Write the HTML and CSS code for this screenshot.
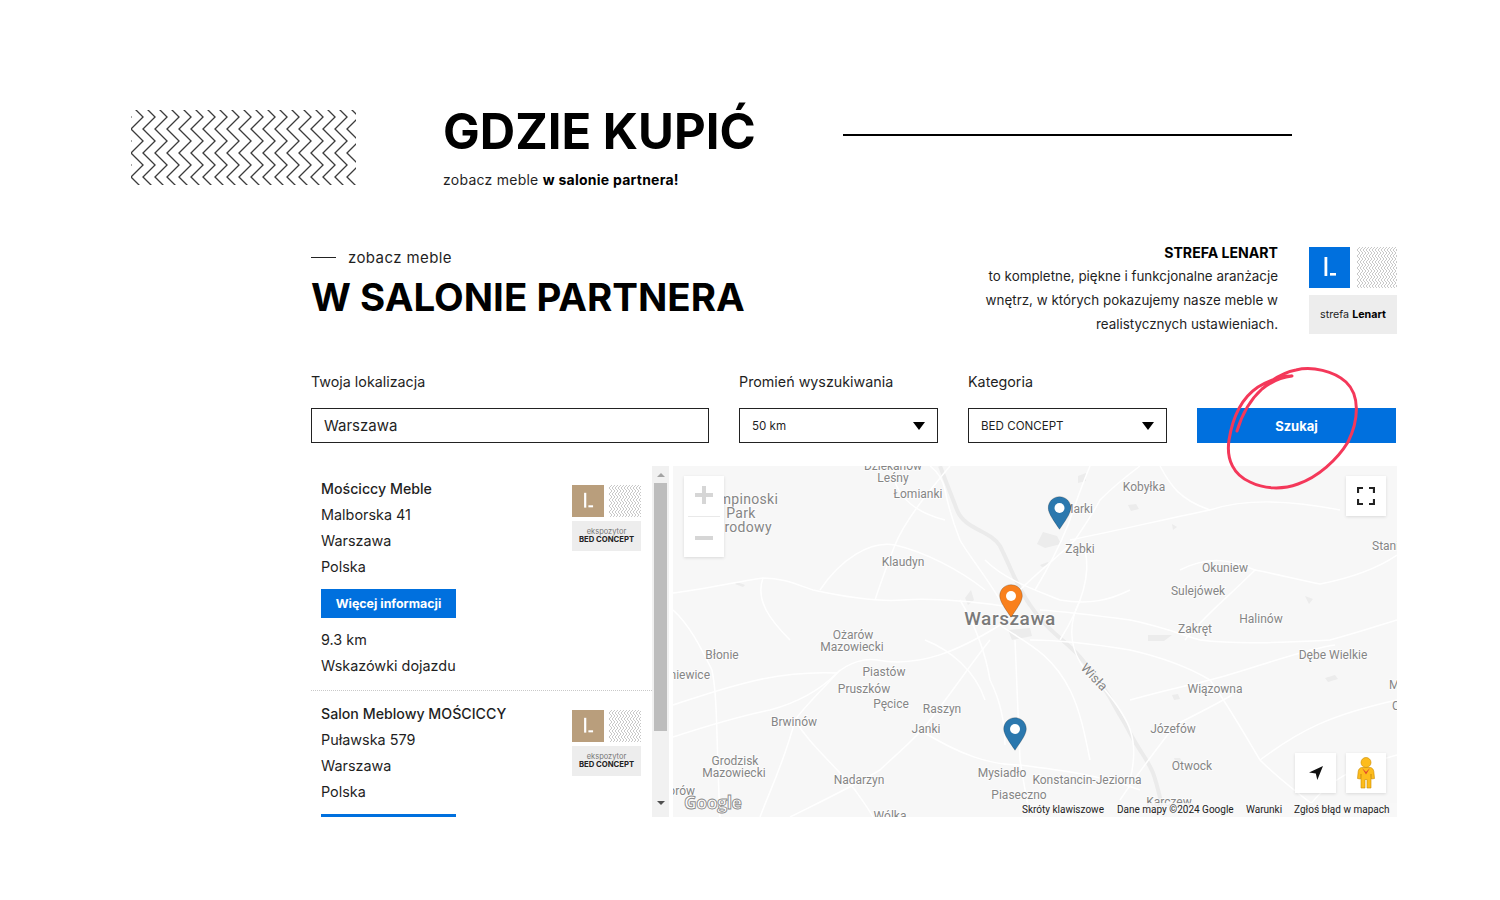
FILE: index.html
```html
<!DOCTYPE html>
<html lang="pl">
<head>
<meta charset="utf-8">
<title>Gdzie kupić</title>
<link rel="stylesheet" href="styles.css">
</head>
<body>
<svg class="defs" width="0" height="0" aria-hidden="true">
  <defs>
    <pattern id="zz" width="12" height="24" patternUnits="userSpaceOnUse" x="0" y="7">
      <path d="M0-12 12 0 0 12 12 24 0 36M12-12 24 0 12 12 24 24 12 36M-12-12 0 0-12 12 0 24-12 36" fill="none" stroke="#3c3c3c" stroke-width="1.3"/>
    </pattern>
    <pattern id="zzs" width="3" height="6" patternUnits="userSpaceOnUse">
      <path d="M0-3 3 0 0 3 3 6 0 9M3-3 6 0 3 3 6 6 3 9M-3-3 0 0-3 3 0 6-3 9" fill="none" stroke="#9a9a9a" stroke-width=".55"/>
    </pattern>
    <symbol id="l-mark" viewBox="0 0 41 41">
      <rect x="15.5" y="10" width="2.8" height="19" fill="#fff"/>
      <rect x="21" y="26" width="6" height="2.6" fill="#fff"/>
    </symbol>
  </defs>
</svg>

<header class="hero">
  <svg class="hero-pattern" width="225" height="75"><rect width="225" height="75" fill="url(#zz)"/></svg>
  <div class="hero-text">
    <h1 class="hero-title">GDZIE KUPIĆ</h1>
    <p class="hero-sub">zobacz meble <b>w salonie partnera!</b></p>
  </div>
  <div class="hero-line"></div>
</header>

<main class="finder">
  <section class="intro">
    <div class="intro-left">
      <p class="kicker"><span class="kicker-dash"></span>zobacz meble</p>
      <h2 class="intro-title">W SALONIE PARTNERA</h2>
    </div>
    <div class="intro-right">
      <h3 class="zone-title">STREFA LENART</h3>
      <p class="zone-line">to kompletne, piękne i funkcjonalne aranżacje</p>
      <p class="zone-line">wnętrz, w których pokazujemy nasze meble w</p>
      <p class="zone-line">realistycznych ustawieniach.</p>
    </div>
    <div class="badge badge-large">
      <div class="badge-top">
        <svg class="mark mark-blue" width="41" height="41"><use href="#l-mark"/></svg>
        <svg class="mark-pattern" width="40" height="41"><rect width="40" height="41" fill="url(#zzs)"/></svg>
      </div>
      <div class="badge-label"><span>strefa <b>Lenart</b></span></div>
    </div>
  </section>

  <form class="search">
    <div class="field field-loc">
      <label class="field-label">Twoja lokalizacja</label>
      <div class="control control-text">Warszawa</div>
    </div>
    <div class="field field-select">
      <label class="field-label">Promień wyszukiwania</label>
      <div class="control control-select">50 km<span class="caret"></span></div>
    </div>
    <div class="field field-select">
      <label class="field-label">Kategoria</label>
      <div class="control control-select">BED CONCEPT<span class="caret"></span></div>
    </div>
    <div class="field field-btn">
      <div class="search-btn">Szukaj</div>
    </div>
  </form>

  <section class="results">
    <div class="list">
      <article class="store">
        <div class="store-info">
          <h4 class="store-name">Mościccy Meble</h4>
          <p class="store-line">Malborska 41</p>
          <p class="store-line">Warszawa</p>
          <p class="store-line">Polska</p>
          <div class="more-btn">Więcej informacji</div>
          <p class="store-line">9.3 km</p>
          <p class="store-line">Wskazówki dojazdu</p>
        </div>
        <div class="badge badge-small">
          <div class="badge-top">
            <svg class="mark mark-tan" width="32" height="32" viewBox="0 0 41 41"><use href="#l-mark"/></svg>
            <svg class="mark-pattern" width="32" height="32"><rect width="32" height="32" fill="url(#zzs)"/></svg>
          </div>
          <div class="badge-label"><span class="expo">ekspozytor<b>BED CONCEPT</b></span></div>
        </div>
      </article>
      <article class="store">
        <div class="store-info">
          <h4 class="store-name">Salon Meblowy MOŚCICCY</h4>
          <p class="store-line">Puławska 579</p>
          <p class="store-line">Warszawa</p>
          <p class="store-line">Polska</p>
          <div class="more-btn">Więcej informacji</div>
        </div>
        <div class="badge badge-small">
          <div class="badge-top">
            <svg class="mark mark-tan" width="32" height="32" viewBox="0 0 41 41"><use href="#l-mark"/></svg>
            <svg class="mark-pattern" width="32" height="32"><rect width="32" height="32" fill="url(#zzs)"/></svg>
          </div>
          <div class="badge-label"><span class="expo">ekspozytor<b>BED CONCEPT</b></span></div>
        </div>
      </article>
    </div>

    <div class="scrollbar">
      <span class="sb-arrow sb-up"></span>
      <span class="sb-thumb"></span>
      <span class="sb-arrow sb-down"></span>
    </div>

    <div class="map">
      <svg class="map-canvas" width="724" height="351" viewBox="673 466 724 351">
        <defs>
          <symbol id="pin" viewBox="0 0 24 34">
            <path d="M12 .7C5.6.7.7 5.7.7 12c0 5.6 6.2 13.6 11.3 21.3C17.100 25.600 23.300 17.600 23.300 12 23.300 5.700 18.400.7 12 .7Z" fill="currentColor" stroke="rgba(0,0,0,.25)" stroke-width=".8"/>
            <circle cx="12" cy="12" r="5" fill="#fff"/>
          </symbol>
        </defs>
        <rect class="map-bg" x="673" y="466" width="724" height="351"/>
        <g class="blocks">
          <path d="M1043 532l14 4 4 8-16 4-8-4z"/>
          <path d="M1078 476l8-3 0 8-8 2z"/>
          <path d="M1128 505l8-1 3 5-8 2z"/>
          <path d="M1008 630l22-2 2 8-20 4z"/>
          <path d="M965 598l6-8 3 10-6 5z"/>
          <path d="M737 582l8 3-2 2-8-3z"/>
          <path d="M1305 596l8 3-4 5z"/>
          <path d="M1172 524l5 3-4 3z"/>
          <path d="M1174 758l6 0 2 4-6 1z"/>
          <path d="M1325 678l10-3 3 4-10 3z"/>
          <path d="M1172 695l6-1 2 5-6 1z"/>
          <path d="M1148 635l24 0-8 6-16 0z"/>
          <path d="M1040 565l8-3 2 3-8 2z"/>
        </g>
        <path class="river" d="M940 466 957 510C965 530 990 530 1000 546 1012 570 1016 585 1030 605 1048 632 1065 640 1080 657 1096 676 1106 690 1113 703 1120 716 1126 725 1130 733 1140 752 1148 760 1153 773 1158 786 1160 800 1165 817"/>
        <g class="roads">
          <path d="M673 737C710 725 740 716 770 710 800 702 820 690 837 673 850 662 865 658 877 660 920 668 960 650 1000 625"/>
          <path d="M673 593C700 590 735 582 763 578 785 578 800 586 813 590 850 598 880 602 903 600 930 598 960 600 1003 606"/>
          <path d="M1000 600C985 575 965 550 960 540 952 520 948 505 945 490 943 480 938 472 930 466"/>
          <path d="M1020 590C1040 570 1060 555 1075 540 1085 525 1095 510 1100 500 1115 485 1128 475 1140 466"/>
          <path d="M1040 610C1070 612 1100 616 1130 620 1160 626 1180 634 1200 640 1240 645 1290 642 1330 640 1360 632 1380 625 1397 620"/>
          <path d="M1030 640C1065 640 1100 645 1130 650 1165 658 1190 668 1210 680 1228 705 1245 735 1260 760 1280 780 1300 795 1320 810"/>
          <path d="M1015 640C1017 680 1018 720 1020 760 1023 780 1027 800 1030 817"/>
          <path d="M990 640C970 665 950 695 930 720 915 740 895 755 880 770 850 788 820 802 790 817"/>
          <path d="M1090 466C1080 490 1075 505 1068 525 1060 545 1050 565 1035 590"/>
          <path d="M1070 540C1120 530 1170 518 1210 510 1240 500 1280 498 1340 510"/>
          <path d="M1255 570C1280 575 1300 580 1320 584 1350 578 1375 570 1397 555"/>
          <path d="M1180 570C1210 555 1230 560 1255 570 1225 600 1205 615 1185 640"/>
          <path d="M673 610C690 625 702 650 712 670 718 700 716 740 720 817"/>
          <path d="M840 670C822 690 806 705 795 720 810 745 830 760 855 790 862 800 868 808 873 817"/>
          <path d="M950 466C930 490 905 520 895 545 885 570 880 585 875 600"/>
          <path d="M820 590C840 560 870 540 895 545 925 552 960 570 985 590"/>
          <path d="M1060 640C1085 600 1090 570 1085 550"/>
          <path d="M1130 700C1165 690 1190 685 1210 680 1250 670 1300 650 1335 645"/>
          <path d="M1120 800C1140 770 1160 745 1175 725 1195 715 1215 705 1232 695"/>
          <path d="M920 730C960 755 990 765 1020 765 1060 770 1100 775 1140 790"/>
          <path d="M673 705C720 690 770 670 837 673"/>
          <path d="M760 817C770 790 785 760 795 720"/>
          <path d="M1080 600C1060 640 1080 670 1105 690 1130 720 1140 740 1130 780"/>
          <path d="M1260 760C1300 730 1330 715 1397 700"/>
          <path d="M960 600C975 625 985 650 990 680 1000 700 1005 720 1005 745"/>
          <path d="M985 560C1005 580 1035 590 1060 600 1090 605 1110 600 1130 590"/>
          <path d="M1000 625C1020 640 1050 650 1070 690 1080 710 1085 735 1090 760"/>
          <path d="M925 640C950 650 975 670 985 700"/>
          <path d="M1160 466C1170 485 1180 500 1210 510"/>
          <path d="M1300 817C1320 790 1340 770 1397 755"/>
          <path d="M790 640C770 620 755 600 763 578"/>
          <path d="M895 466C890 485 905 510 945 520"/>
        </g>
        <g class="labels">
          <text x="893" y="470">Dziekanów</text>
          <text x="893" y="482">Leśny</text>
          <text x="918" y="498">Łomianki</text>
          <text class="big" x="740" y="504">Kampinoski</text>
          <text class="big" x="741" y="518">Park</text>
          <text class="big" x="739" y="532">Narodowy</text>
          <text x="1144" y="491">Kobyłka</text>
          <text x="1078" y="513">Marki</text>
          <text x="1080" y="553">Ząbki</text>
          <text x="903" y="566">Klaudyn</text>
          <text x="1225" y="572">Okuniew</text>
          <text x="1198" y="595">Sulejówek</text>
          <text class="start" x="1372" y="550">Stanisławów</text>
          <text x="1261" y="623">Halinów</text>
          <text x="1195" y="633">Zakręt</text>
          <text class="city" x="1010" y="625">Warszawa</text>
          <text x="853" y="639">Ożarów</text>
          <text x="852" y="651">Mazowiecki</text>
          <text x="722" y="659">Błonie</text>
          <text class="end" x="710" y="679">Miedniewice</text>
          <text x="1333" y="659">Dębe Wielkie</text>
          <text x="884" y="676">Piastów</text>
          <text x="864" y="693">Pruszków</text>
          <text x="891" y="708">Pęcice</text>
          <text x="942" y="713">Raszyn</text>
          <text class="river-label" transform="translate(1091 680) rotate(46)">Wisła</text>
          <text x="1215" y="693">Wiązowna</text>
          <text x="794" y="726">Brwinów</text>
          <text x="926" y="733">Janki</text>
          <text x="1173" y="733">Józefów</text>
          <text x="735" y="765">Grodzisk</text>
          <text x="734" y="777">Mazowiecki</text>
          <text x="1192" y="770">Otwock</text>
          <text x="1002" y="777">Mysiadło</text>
          <text x="1087" y="784">Konstancin-Jeziorna</text>
          <text x="859" y="784">Nadarzyn</text>
          <text x="1019" y="799">Piaseczno</text>
          <text x="1169" y="806">Karczew</text>
          <text x="890" y="820">Wólka</text>
          <text class="end" x="695" y="795">Jaktorów</text>
          <text class="start" x="1389" y="689">Mienia</text>
          <text class="start" x="1392" y="710">Celestynów</text>
        </g>
        <use href="#pin" class="pin-blue" x="1047.500" y="496" width="24" height="34"/>
        <use href="#pin" class="pin-orange" x="999" y="584" width="24" height="34"/>
        <use href="#pin" class="pin-blue" x="1003" y="717" width="24" height="34"/>
        <text class="google" x="684" y="809">Google</text>
      </svg>

      <div class="map-btn zoom-ctl">
        <span class="zoom-plus"></span>
        <span class="zoom-sep"></span>
        <span class="zoom-minus"></span>
      </div>
      <div class="map-btn fullscreen">
        <svg width="18" height="18" viewBox="0 0 18 18"><path d="M1 6V1H6M12 1H17V6M17 12V17H12M6 17H1V12" fill="none" stroke="#222" stroke-width="2.200"/></svg>
      </div>
      <div class="map-btn locate">
        <svg width="16" height="16" viewBox="0 0 16 16"><path d="M15 1 1 7.500 7.800 8.600 9.300 15Z" fill="#111"/></svg>
      </div>
      <div class="map-btn pegman">
        <svg width="18" height="32" viewBox="0 0 18 32">
          <circle cx="9" cy="5.500" r="5" fill="#fdbc1c" stroke="#c98a00" stroke-width=".6"/>
          <path d="M4.500 10.500H13.500C15.500 11 16.500 12.500 16.800 14.500L17.500 21.500 14.500 22 14 17V31H10V22.500H8V31H4V17L3.500 22 .5 21.500 1.200 14.500C1.500 12.500 2.500 11 4.500 10.500Z" fill="#fdbc1c" stroke="#c98a00" stroke-width=".6"/>
          <path d="M5 11 9 15 13 11 9 17.500Z" fill="#e0492d"/>
        </svg>
      </div>
      <div class="map-foot">
        <span class="foot-keys">Skróty klawiszowe</span>
        <span class="foot-data">Dane mapy ©2024 Google</span>
        <span class="foot-terms">Warunki</span>
        <span class="foot-report">Zgłoś błąd w mapach</span>
      </div>
    </div>
  </section>
</main>

<svg class="scribble" width="150" height="135" viewBox="1220 360 150 135">
  <path d="M1237 431C1243 411 1252 398 1262 389 1272 381 1282 377 1292 376 1282 376 1270 380 1258 387 1243 397 1233 415 1229 440 1226 460 1234 475 1250 482 1264 489 1282 490 1298 484 1318 477 1337 460 1348 442 1359 420 1360 395 1346 382 1334 371 1312 366 1296 370 1285 372 1275 378 1267 384" fill="none" stroke="#f4385a" stroke-width="3" stroke-linecap="round" stroke-linejoin="round"/>
</svg>
</body>
</html>
```

FILE: styles.css
```css
* { box-sizing: border-box; }

html, body {
  margin: 0;
  padding: 0;
  background: #fff;
}

body {
  position: relative;
  width: 1500px;
  height: 900px;
  overflow: hidden;
  font-family: Inter, "Noto Sans", "Liberation Sans", sans-serif;
  color: #1f1f1f;
}

h1, h2, h3, h4, p { margin: 0; font-weight: 400; }

.defs { display: block; }

/* hero */
.hero {
  display: flex;
  align-items: flex-start;
  height: 232px;
  padding: 101px 0 0 131px;
}

.hero-pattern { margin-top: 9px; flex: none; }

.hero-text { margin-left: 87px; width: 311px; flex: none; }

.hero-title {
  font-size: 49px;
  line-height: 62px;
  font-weight: 700;
  color: #000;
  white-space: nowrap;
}

.hero-sub {
  margin-top: 7px;
  font-size: 14px;
  line-height: 20px;
  letter-spacing: .25px;
  white-space: nowrap;
}

.hero-sub b { font-weight: 700; color: #000; }

.hero-line {
  width: 449px;
  height: 2px;
  margin: 33px 0 0 89px;
  background: #000;
}

/* finder */
.finder {
  width: 1086px;
  margin: 15px 0 0 311px;
}

.intro {
  display: flex;
  align-items: flex-start;
  height: 108px;
}

.intro-left { flex: 1; }

.kicker {
  display: flex;
  align-items: center;
  height: 20px;
  font-size: 15px;
  letter-spacing: .4px;
}

.kicker-dash {
  width: 25px;
  height: 1px;
  margin-right: 12px;
  background: #222;
}

.intro-title {
  margin-top: 7px;
  font-size: 38.5px;
  line-height: 46px;
  font-weight: 700;
  color: #000;
  white-space: nowrap;
}

.intro-right {
  width: 400px;
  margin-top: -2px;
  text-align: right;
}

.zone-title {
  font-size: 14.1px;
  line-height: 16px;
  font-weight: 700;
  color: #000;
}

.zone-line {
  font-size: 13.4px;
  line-height: 24px;
}

.zone-title + .zone-line { margin-top: 3px; }

/* badges */
.badge { flex: none; display: flex; flex-direction: column; }
.badge-top { display: flex; justify-content: space-between; }
.badge-large { width: 88px; margin-left: 31px; gap: 7px; }
.badge-small { width: 69px; gap: 4px; margin-top: 9px; }
.mark { display: block; }
.mark-blue { background: #0070de; }
.mark-tan { background: #b99e7c; }
.mark-pattern { display: block; }

.badge-label {
  display: flex;
  align-items: center;
  justify-content: center;
  background: #ededed;
  text-align: center;
}

.badge-large .badge-label {
  height: 39px;
  font-size: 10.7px;
}

.badge-label b { font-weight: 700; color: #000; }

.badge-small .badge-label { height: 30px; }

.expo {
  display: flex;
  flex-direction: column;
  font-size: 7.5px;
  line-height: 8px;
  color: #777;
}

.expo b { font-size: 7.7px; white-space: nowrap; color: #222; }

/* search */
.search {
  display: flex;
  gap: 30px;
  height: 70px;
  margin-top: 18px;
}

.field { display: flex; flex-direction: column; flex: none; width: 199px; }
.field-loc { width: 398px; }
.field-btn { justify-content: flex-end; width: 199px; }

.field-label {
  height: 35px;
  font-size: 14.3px;
  line-height: 17px;
  white-space: nowrap;
}

.control {
  display: flex;
  align-items: center;
  justify-content: space-between;
  height: 35px;
  padding: 0 12px;
  border: 1px solid #222;
  background: #fff;
}

.control-text { font-size: 15px; }
.control-select { font-size: 11.6px; }

.caret {
  width: 0;
  height: 0;
  border-left: 6.500px solid transparent;
  border-right: 6.500px solid transparent;
  border-top: 8px solid #000;
}

.search-btn {
  display: flex;
  align-items: center;
  justify-content: center;
  height: 35px;
  background: #0070de;
  color: #fff;
  font-size: 13px;
  font-weight: 700;
}

/* results */
.results {
  display: flex;
  height: 351px;
  margin-top: 23px;
}

.list {
  width: 341px;
  flex: none;
  height: 351px;
  overflow: hidden;
}

.store {
  display: flex;
  justify-content: space-between;
  padding: 10px 11px 11px 10px;
  border-bottom: 1px dotted #c9c9c9;
}

.store-name {
  font-size: 14.2px;
  line-height: 26px;
  font-weight: 500;
  white-space: nowrap;
}

.store-line {
  font-size: 14.4px;
  line-height: 26px;
  white-space: nowrap;
}

.more-btn {
  display: flex;
  align-items: center;
  justify-content: center;
  width: 135px;
  height: 29px;
  margin: 9px 0;
  background: #0070de;
  color: #fff;
  font-size: 12.4px;
  font-weight: 700;
  white-space: nowrap;
}

.scrollbar {
  flex: none;
  display: flex;
  flex-direction: column;
  align-items: center;
  width: 17px;
  height: 351px;
  background: #f1f1f1;
}

.sb-arrow {
  width: 0;
  height: 0;
  border-left: 4px solid transparent;
  border-right: 4px solid transparent;
}

.sb-up { margin-top: 7px; border-bottom: 4px solid #a3a3a3; }
.sb-down { margin-top: 70px; border-top: 4px solid #505050; }

.sb-thumb {
  width: 13px;
  height: 248px;
  margin-top: 6px;
  background: #bdbdbd;
}

/* map */
.map {
  position: relative;
  flex: none;
  width: 724px;
  height: 351px;
  margin-left: 4px;
  overflow: hidden;
  background: #f7f7f7;
}

.map-canvas { display: block; }
.map-bg { fill: #f7f7f7; }
.blocks path { fill: #ececec; }
.river { fill: none; stroke: #ebebeb; stroke-width: 4; }
.roads path { fill: none; stroke: #fff; stroke-width: 1.500; }

.labels text {
  font-family: Roboto, "Noto Sans", sans-serif;
  font-size: 12px;
  fill: #858585;
  text-anchor: middle;
  paint-order: stroke;
  stroke: rgba(255,255,255,.8);
  stroke-width: 1.500px;
}

.labels .big { font-size: 14px; letter-spacing: .3px; }
.labels .start { text-anchor: start; }
.labels .end { text-anchor: end; }
.labels .city { font-size: 19px; font-weight: 500; fill: #7a7a7a; letter-spacing: .55px; }
.labels .river-label { font-size: 13px; }

.pin-blue { color: #2b78ae; }
.pin-orange { color: #f9801d; }

.google {
  font-family: "Open Sans", "Liberation Sans", sans-serif;
  font-size: 17.5px;
  font-weight: 700;
  letter-spacing: -.4px;
  fill: #fff;
  stroke: #8c8c8c;
  stroke-width: .9px;
}

.map-btn {
  position: absolute;
  display: flex;
  align-items: center;
  justify-content: center;
  background: #fff;
  box-shadow: 0 1px 3px rgba(0,0,0,.12);
}

.zoom-ctl {
  left: 11px;
  top: 10px;
  width: 40px;
  height: 81px;
  flex-direction: column;
}

.zoom-plus, .zoom-minus {
  position: relative;
  display: block;
  width: 18px;
  height: 4px;
  background: #d6d6d6;
}

.zoom-plus::after {
  content: "";
  position: absolute;
  left: 7px;
  top: -7px;
  width: 4px;
  height: 18px;
  background: #d6d6d6;
}

.zoom-sep {
  width: 32px;
  height: 1px;
  margin: 19px 0;
  background: #e9e9e9;
}

.fullscreen { left: 673px; top: 10px; width: 40px; height: 40px; }
.locate { left: 622px; top: 287px; width: 41px; height: 40px; }
.pegman { left: 673px; top: 287px; width: 40px; height: 40px; }

.map-foot {
  position: absolute;
  left: 349px;
  right: 0;
  bottom: 0;
  display: flex;
  height: 14px;
  background: rgba(247,247,247,.9);
  font-family: Roboto, "Liberation Sans", sans-serif;
  font-size: 10px;
  line-height: 14px;
  color: #222;
  white-space: nowrap;
}

.foot-keys { width: 95px; }
.foot-data { width: 129px; }
.foot-terms { width: 48px; }

/* hand-drawn annotation over the page */
.scribble {
  position: absolute;
  left: 1220px;
  top: 360px;
}
```
